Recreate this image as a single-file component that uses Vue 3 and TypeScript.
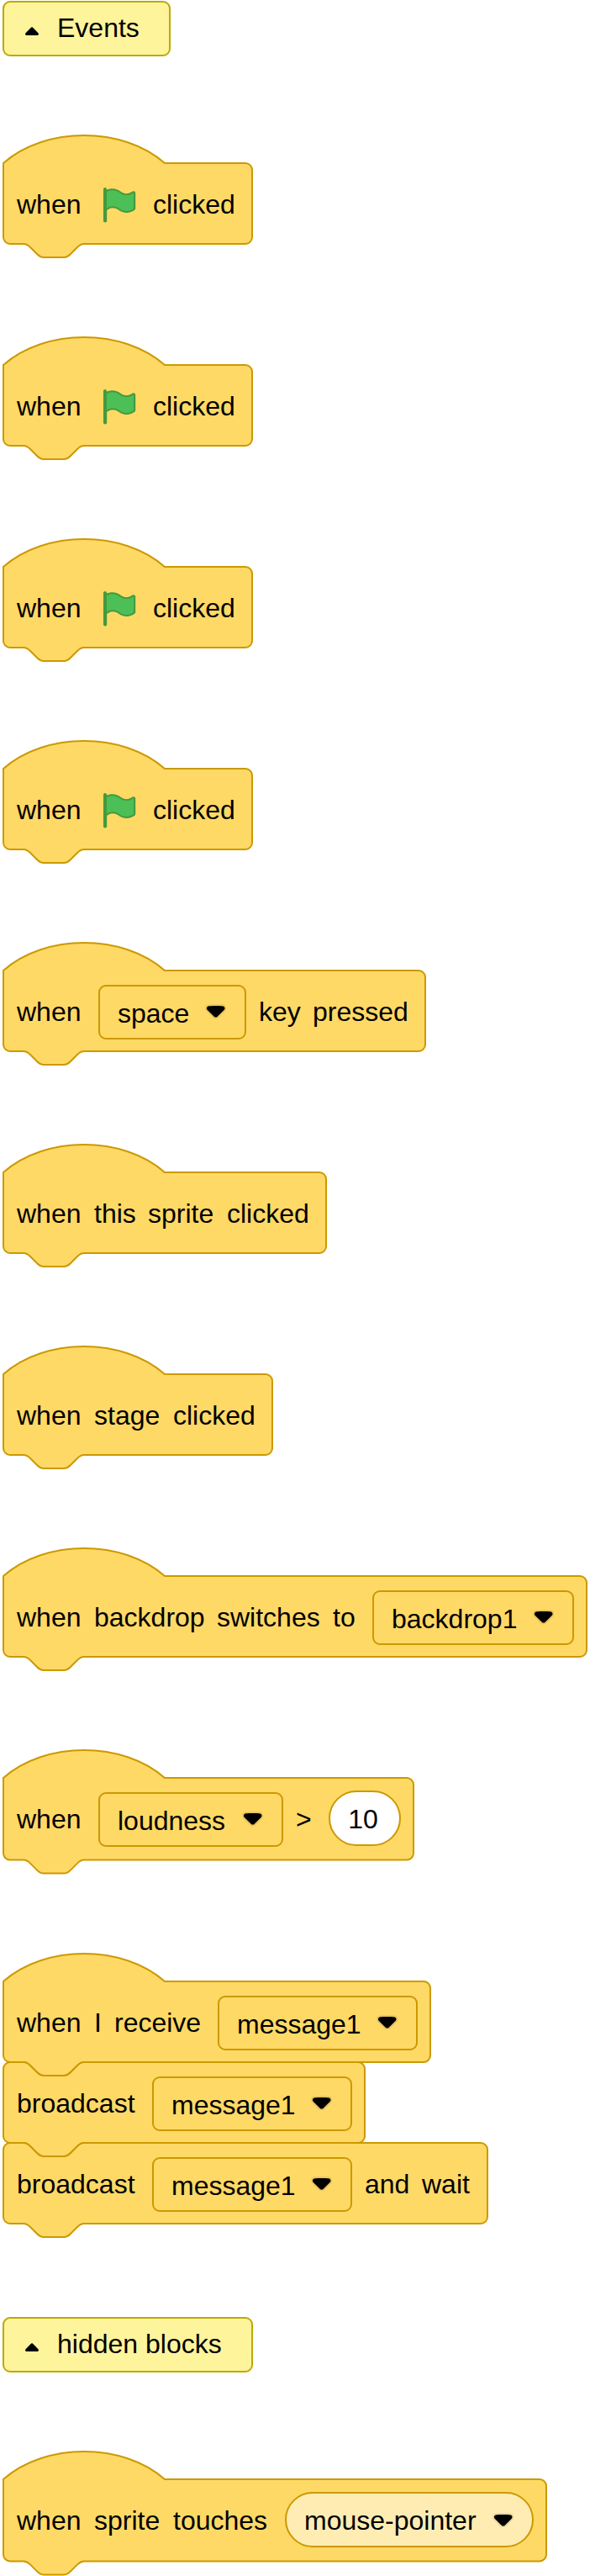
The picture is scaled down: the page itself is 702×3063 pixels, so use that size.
<script setup lang="ts">
type Part =
  | { kind: 'word'; text: string; x: number }
  | { kind: 'flag'; x: number }
  | { kind: 'menu'; text: string; x: number; w: number }
  | { kind: 'reporter'; text: string; x: number; w: number }
  | { kind: 'number'; text: string; x: number; w: number }

interface Block {
  hat: boolean
  w: number
  h: number
  parts: Part[]
}

interface Section {
  note?: string
  noteWidth?: number
  blocks?: Block[]
}

const word = (text: string, x: number): Part => ({ kind: 'word', text, x })
const menu = (text: string, x: number, w: number): Part => ({ kind: 'menu', text, x, w })
const block = (w: number, parts: Part[], h = 96, hat = true): Block => ({ hat, w, h, parts })

const flagBlock = (): Block =>
  block(296, [word('when', 16), { kind: 'flag', x: 114 }, word('clicked', 178)])

const sections: Section[] = [
  { note: 'Events', noteWidth: 198 },
  { blocks: [flagBlock()] },
  { blocks: [flagBlock()] },
  { blocks: [flagBlock()] },
  { blocks: [flagBlock()] },
  { blocks: [block(502, [word('when', 16), menu('space', 114, 174), word('key', 304), word('pressed', 368)])] },
  { blocks: [block(384, [word('when', 16), word('this', 108), word('sprite', 172), word('clicked', 266)])] },
  { blocks: [block(320, [word('when', 16), word('stage', 108), word('clicked', 202)])] },
  {
    blocks: [
      block(694, [
        word('when', 16),
        word('backdrop', 108),
        word('switches', 254),
        word('to', 392),
        menu('backdrop1', 440, 238),
      ]),
    ],
  },
  {
    blocks: [
      block(
        488,
        [
          word('when', 16),
          menu('loudness', 114, 218),
          word('>', 348),
          { kind: 'number', text: '10', x: 388, w: 84 },
        ],
        97.6,
      ),
    ],
  },
  {
    blocks: [
      block(508, [word('when', 16), word('I', 108), word('receive', 132), menu('message1', 256, 236)]),
      block(430, [word('broadcast', 16), menu('message1', 178, 236)], 96, false),
      block(576, [word('broadcast', 16), menu('message1', 178, 236), word('and', 430), word('wait', 498)], 96, false),
    ],
  },
  { note: 'hidden blocks', noteWidth: 296 },
  {
    blocks: [
      block(
        646,
        [
          word('when', 16),
          word('sprite', 108),
          word('touches', 202),
          { kind: 'reporter', text: 'mouse-pointer', x: 336, w: 294 },
        ],
        97.4,
      ),
    ],
  },
]

function outline({ w, h, hat }: Block): string {
  const top = hat
    ? `M0 0c50-44 142-44 192 0H${w - 8}a8 8 0 0 1 8 8`
    : `M0 8A8 8 0 0 1 8 0H24c4 0 6 2 8 4l8 8c2 2 4 4 8 4h24c4 0 6-2 8-4l8-8c2-2 4-4 8-4H${w - 8}a8 8 0 0 1 8 8`
  return `${top}V${h - 8}a8 8 0 0 1-8 8H96c-4 0-6 2-8 4l-8 8c-2 2-4 4-8 4h-24c-4 0-6-2-8-4l-8-8c-2-2-4-4-8-4H8a8 8 0 0 1-8-8z`
}

// Each slot spans up to where the next part begins.
function slotWidth(b: Block, i: number): string {
  const end = i + 1 < b.parts.length ? b.parts[i + 1].x : b.w
  return `${end - b.parts[i].x}px`
}
</script>

<template>
  <main class="sheet">
    <template v-for="(s, si) in sections" :key="si">
      <div v-if="s.note" class="note" :style="{ width: `${s.noteWidth! + 2}px` }">
        <svg class="fold" width="16" height="10" viewBox="0 0 16 10">
          <path d="M1.6 10C0.2 10-.5 8.3.6 7.2L6.4 1.2Q8-.9 9.6 1.2L15.4 7.2C16.5 8.3 15.8 10 14.4 10Z" />
        </svg>
        <span>{{ s.note }}</span>
      </div>
      <section v-else class="script" :class="{ hatted: s.blocks![0].hat }">
        <div
          v-for="(b, bi) in s.blocks"
          :key="bi"
          class="block"
          :style="{ width: `${b.w}px`, height: `${b.h}px` }"
        >
          <svg class="shape" :width="b.w" :height="b.h">
            <path :d="outline(b)" />
          </svg>
          <div class="row">
            <div v-for="(p, pi) in b.parts" :key="pi" class="slot" :style="{ width: slotWidth(b, pi) }">
              <span v-if="p.kind === 'word'" class="word">{{ p.text }}</span>
              <svg v-else-if="p.kind === 'flag'" class="flag" width="48" height="48" viewBox="0 0 24 24">
                <path
                  fill="#45993d"
                  d="M20.8 3.7c-.4-.2-.9-.1-1.2.2-2 1.6-4.8 1.6-6.8 0-2.3-1.9-5.6-2.3-8.3-1v-.4c0-.6-.5-1-1-1s-1 .4-1 1v18.8c0 .5.5 1 1 1h.1c.5 0 1-.5 1-1v-6.4c1-.7 2.1-1.2 3.4-1.3 1.2 0 2.4.4 3.4 1.2 2.9 2.3 7 2.3 9.8 0 .3-.2.4-.5.4-.9V4.7c0-.5-.3-.9-.8-1z"
                />
                <path
                  fill="#4cbf56"
                  d="M20.6 4.8l-.1 9.1v.1c-2.5 2-6.1 2-8.6 0-1.1-.9-2.5-1.4-4-1.4-1.2.1-2.3.5-3.4 1.1V4c2.5-1.4 5.5-1.1 7.7.6 2.4 1.9 5.7 1.9 8.1 0h.2c0 .1.1.1.1.2z"
                />
              </svg>
              <div v-else class="field" :class="p.kind" :style="{ width: `${p.w + 2}px` }">
                <span>{{ p.text }}</span>
                <svg v-if="p.kind !== 'number'" class="arrow" width="25.42" height="17.6" viewBox="0 0 12.71 8.8">
                  <path
                    fill="#231f20"
                    opacity=".1"
                    d="M12.71 2.44A2.41 2.41 0 0 1 12 4.16L8.08 8.08a2.45 2.45 0 0 1-3.45 0L.72 4.16A2.42 2.42 0 0 1 0 2.44 2.48 2.48 0 0 1 .71.71C1 .47 1.43 0 6.36 0s5.39.46 5.64.71a2.44 2.44 0 0 1 .71 1.73z"
                  />
                  <path
                    d="M6.36 7.79a1.43 1.43 0 0 1-1-.42L1.42 3.45a1.44 1.44 0 0 1 0-2c.56-.56 9.31-.56 9.87 0a1.44 1.44 0 0 1 0 2L7.37 7.37a1.43 1.43 0 0 1-1.01.42z"
                  />
                </svg>
              </div>
            </div>
          </div>
        </div>
      </section>
    </template>
  </main>
</template>

<style>
body {
  background: #fff;
}
</style>

<style scoped>
.sheet {
  box-sizing: border-box;
  width: 702px;
  height: 3063px;
  padding: 1px 0 0 4px;
  overflow: hidden;
  display: flex;
  flex-direction: column;
  align-items: flex-start;
  font: 32px 'Liberation Sans', Arial, sans-serif;
  color: #000;
  white-space: nowrap;
}

.note {
  box-sizing: border-box;
  height: 66px;
  margin-left: -1px;
  padding-left: 26px;
  display: flex;
  align-items: flex-start;
  background: #fef49c;
  border: 2px solid #bca903;
  border-radius: 9px;
  line-height: 60px;
}

.note span {
  margin-left: 22px;
}

.fold {
  display: block;
  flex: none;
  margin: 29px 0 0 -1px;
}

.script {
  margin-top: 112px;
}

.script.hatted {
  padding-top: 32px;
}

.note + .script {
  margin-top: 95px;
}

.script + .note {
  margin-top: 111px;
}

.block {
  display: grid;
}

.shape,
.row {
  grid-area: 1 / 1;
}

.shape {
  display: block;
  overflow: visible;
}

.shape path {
  fill: #ffd966;
  stroke: #cc9900;
  stroke-width: 2;
}

.row {
  display: flex;
  align-items: flex-start;
  padding-left: 16px;
}

.slot {
  flex: none;
}

.word {
  display: block;
  height: 96px;
  line-height: 98px;
}

.flag {
  display: block;
  margin-top: 26px;
}

.field {
  box-sizing: border-box;
  display: flex;
  justify-content: space-between;
  align-items: flex-start;
  margin-left: -1px;
  border: 2px solid #cc9900;
}

.menu {
  height: 65px;
  margin-top: 17px;
  padding: 0 22px 0 21px;
  border-radius: 9px;
  line-height: 64px;
}

.reporter {
  height: 66px;
  margin-top: 15px;
  padding: 0 22px 0 21px;
  border-radius: 33px;
  background: #ffecb3;
  line-height: 64px;
}

.number {
  height: 66px;
  margin-top: 15px;
  padding-right: 4px;
  justify-content: center;
  border-radius: 33px;
  background: #fff;
  line-height: 64px;
}

.arrow {
  display: block;
  flex: none;
  margin-top: 21px;
}

.reporter .arrow {
  margin-top: 23px;
}
</style>
